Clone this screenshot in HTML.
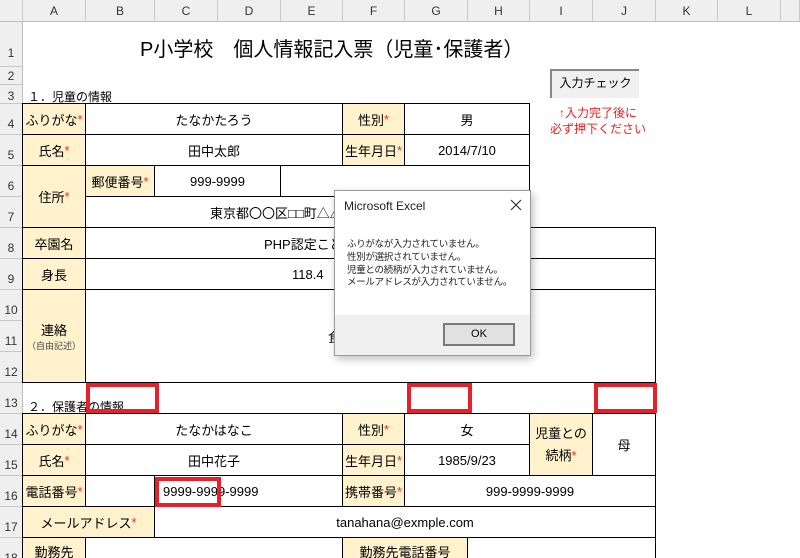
<!DOCTYPE html>
<html><head><meta charset="utf-8"><style>
*{margin:0;padding:0;box-sizing:border-box}
html,body{width:800px;height:558px;overflow:hidden}
body{background:#fff;position:relative;font-family:"Liberation Sans","Noto Sans CJK JP",sans-serif;font-size:13px;color:#000}
.a{position:absolute}
.ch{position:absolute;top:0;height:22px;background:#efefef;border-right:1px solid #c8c8c8;border-bottom:1px solid #bdbdbd;text-align:center;line-height:22px;font-size:12px;color:#333}
.rh{position:absolute;left:0;width:23px;background:#efefef;border-bottom:1px solid #c8c8c8;border-right:1px solid #bdbdbd;font-size:12px;color:#333;text-align:center}
.c{position:absolute;border:1px solid #000;background:#fff;display:flex;align-items:center;justify-content:center;text-align:center;margin:-1px 0 0 -1px}
.l{background:#fff2cc}
.s{color:#f22}
.r{position:absolute;border:4px solid #e8202a}
</style></head><body>
<div class="ch" style="left:0;width:23px"></div>
<div class="ch" style="left:23px;width:63px">A</div><div class="ch" style="left:86px;width:69px">B</div><div class="ch" style="left:155px;width:63px">C</div><div class="ch" style="left:218px;width:63px">D</div><div class="ch" style="left:281px;width:62px">E</div><div class="ch" style="left:343px;width:62px">F</div><div class="ch" style="left:405px;width:63px">G</div><div class="ch" style="left:468px;width:62px">H</div><div class="ch" style="left:530px;width:63px">I</div><div class="ch" style="left:593px;width:63px">J</div><div class="ch" style="left:656px;width:62px">K</div><div class="ch" style="left:718px;width:63px">L</div><div class="ch" style="left:781px;width:19px"></div>
<div class="rh" style="top:22px;height:45px;line-height:62px">1</div>
<div class="rh" style="top:67px;height:18px;line-height:18px">2</div>
<div class="rh" style="top:85px;height:19px;line-height:22px">3</div>
<div class="rh" style="top:104px;height:31px;line-height:40px">4</div>
<div class="rh" style="top:135px;height:31px;line-height:40px">5</div>
<div class="rh" style="top:166px;height:31px;line-height:40px">6</div>
<div class="rh" style="top:197px;height:31px;line-height:40px">7</div>
<div class="rh" style="top:228px;height:31px;line-height:40px">8</div>
<div class="rh" style="top:259px;height:31px;line-height:40px">9</div>
<div class="rh" style="top:290px;height:31px;line-height:40px">10</div>
<div class="rh" style="top:321px;height:31px;line-height:40px">11</div>
<div class="rh" style="top:352px;height:31px;line-height:40px">12</div>
<div class="rh" style="top:383px;height:31px;line-height:40px">13</div>
<div class="rh" style="top:414px;height:31px;line-height:40px">14</div>
<div class="rh" style="top:445px;height:31px;line-height:40px">15</div>
<div class="rh" style="top:476px;height:31px;line-height:40px">16</div>
<div class="rh" style="top:507px;height:31px;line-height:40px">17</div>
<div class="rh" style="top:538px;height:31px;line-height:40px">18</div>
<div class="a" style="left:140px;top:33px;font-size:20px;white-space:nowrap">P小学校　個人情報記入票（児童･保護者）</div>
<div class="a" style="left:28px;top:88px;font-size:12px">１．児童の情報</div>
<div class="c l" style="left:23px;top:104px;width:64px;height:32px">ふりがな<span class="s">*</span></div>
<div class="c" style="left:86px;top:104px;width:258px;height:32px">たなかたろう</div>
<div class="c l" style="left:343px;top:104px;width:63px;height:32px">性別<span class="s">*</span></div>
<div class="c" style="left:405px;top:104px;width:126px;height:32px">男</div>
<div class="c l" style="left:23px;top:135px;width:64px;height:32px">氏名<span class="s">*</span></div>
<div class="c" style="left:86px;top:135px;width:258px;height:32px">田中太郎</div>
<div class="c l" style="left:343px;top:135px;width:63px;height:32px">生年月日<span class="s">*</span></div>
<div class="c" style="left:405px;top:135px;width:126px;height:32px">2014/7/10</div>
<div class="c l" style="left:23px;top:166px;width:64px;height:63px">住所<span class="s">*</span></div>
<div class="c l" style="left:86px;top:166px;width:70px;height:32px">郵便番号<span class="s">*</span></div>
<div class="c" style="left:155px;top:166px;width:127px;height:32px">999-9999</div>
<div class="c" style="left:281px;top:166px;width:250px;height:32px"></div>
<div class="c" style="left:86px;top:197px;width:445px;height:32px;justify-content:flex-start;padding-left:124px">東京都〇〇区□□町△△</div>
<div class="c l" style="left:23px;top:228px;width:64px;height:32px">卒園名</div>
<div class="c" style="left:86px;top:228px;width:571px;height:32px;justify-content:flex-start;padding-left:178px">PHP認定こども園</div>
<div class="c l" style="left:23px;top:259px;width:64px;height:32px">身長</div>
<div class="c" style="left:86px;top:259px;width:571px;height:32px;justify-content:flex-start;padding-left:206px">118.4</div>
<div class="c l" style="left:23px;top:290px;width:64px;height:94px;flex-direction:column">連絡<span style="font-size:9px;color:#444">（自由記述）</span></div>
<div class="c" style="left:86px;top:290px;width:571px;height:94px;justify-content:flex-start;padding-left:242px">食</div>
<div class="a" style="left:28px;top:398px;font-size:12px">２．保護者の情報</div>
<div class="c l" style="left:23px;top:414px;width:64px;height:32px">ふりがな<span class="s">*</span></div>
<div class="c" style="left:86px;top:414px;width:258px;height:32px">たなかはなこ</div>
<div class="c l" style="left:343px;top:414px;width:63px;height:32px">性別<span class="s">*</span></div>
<div class="c" style="left:405px;top:414px;width:126px;height:32px">女</div>
<div class="c l" style="left:530px;top:414px;width:64px;height:63px"><span style="line-height:22px;white-space:nowrap">児童との<br>続柄<span class="s">*</span></span></div>
<div class="c" style="left:593px;top:414px;width:64px;height:63px">母</div>
<div class="c l" style="left:23px;top:445px;width:64px;height:32px">氏名<span class="s">*</span></div>
<div class="c" style="left:86px;top:445px;width:258px;height:32px">田中花子</div>
<div class="c l" style="left:343px;top:445px;width:63px;height:32px">生年月日<span class="s">*</span></div>
<div class="c" style="left:405px;top:445px;width:126px;height:32px">1985/9/23</div>
<div class="c l" style="left:23px;top:476px;width:64px;height:32px">電話番号<span class="s">*</span></div>
<div class="c" style="left:86px;top:476px;width:70px;height:32px"></div>
<div class="c" style="left:155px;top:476px;width:189px;height:32px;justify-content:flex-start;padding-left:8px">9999-9999-9999</div>
<div class="c l" style="left:343px;top:476px;width:63px;height:32px">携帯番号<span class="s">*</span></div>
<div class="c" style="left:405px;top:476px;width:252px;height:32px">999-9999-9999</div>
<div class="c l" style="left:23px;top:507px;width:133px;height:32px">メールアドレス<span class="s">*</span></div>
<div class="c" style="left:155px;top:507px;width:502px;height:32px">tanahana@exmple.com</div>
<div class="c l" style="left:23px;top:538px;width:64px;height:32px;align-items:flex-start;padding-top:4px">勤務先</div>
<div class="c" style="left:86px;top:538px;width:258px;height:32px"></div>
<div class="c l" style="left:343px;top:538px;width:126px;height:32px;align-items:flex-start;padding-top:4px">勤務先電話番号</div>
<div class="c" style="left:468px;top:538px;width:189px;height:32px"></div>
<div class="r" style="left:86px;top:383px;width:73px;height:30px"></div>
<div class="r" style="left:407px;top:383px;width:65px;height:30px"></div>
<div class="r" style="left:594px;top:383px;width:63px;height:30px"></div>
<div class="r" style="left:155px;top:477px;width:66px;height:30px"></div>
<div class="a" style="left:550px;top:69px;width:89px;height:29px;background:#f0f0f0;border-left:2px solid #888;border-top:2px solid #888;font-size:12px;text-align:center;line-height:25px">入力チェック</div>
<div class="a" style="left:540px;top:105px;color:#f02020;font-size:12px;line-height:16px;text-align:center;width:116px;white-space:nowrap">↑入力完了後に<br>必ず押下ください</div>
<div class="a" style="left:334px;top:190px;width:197px;height:166px;background:#fff;border:1px solid #9a9a9a;box-shadow:2px 3px 8px rgba(0,0,0,.25)">
<div class="a" style="left:9px;top:8px;font-size:12px;color:#222">Microsoft Excel</div>
<svg class="a" style="left:175px;top:8px" width="12" height="12"><path d="M1 1L11 11M11 1L1 11" stroke="#333" stroke-width="1.2"/></svg>
<div class="a" style="left:12px;top:48px;font-size:9.5px;line-height:12.8px;color:#222;white-space:nowrap;letter-spacing:-0.3px">ふりがなが入力されていません。<br>性別が選択されていません。<br>児童との続柄が入力されていません。<br>メールアドレスが入力されていません。</div>
<div class="a" style="left:0;top:124px;width:195px;height:40px;background:#f0f0f0"></div>
<div class="a" style="left:108px;top:132px;width:72px;height:23px;background:#e1e1e1;border:2px solid #7a7a7a;font-size:11px;text-align:center;line-height:19px">OK</div>
</div>
</body></html>
